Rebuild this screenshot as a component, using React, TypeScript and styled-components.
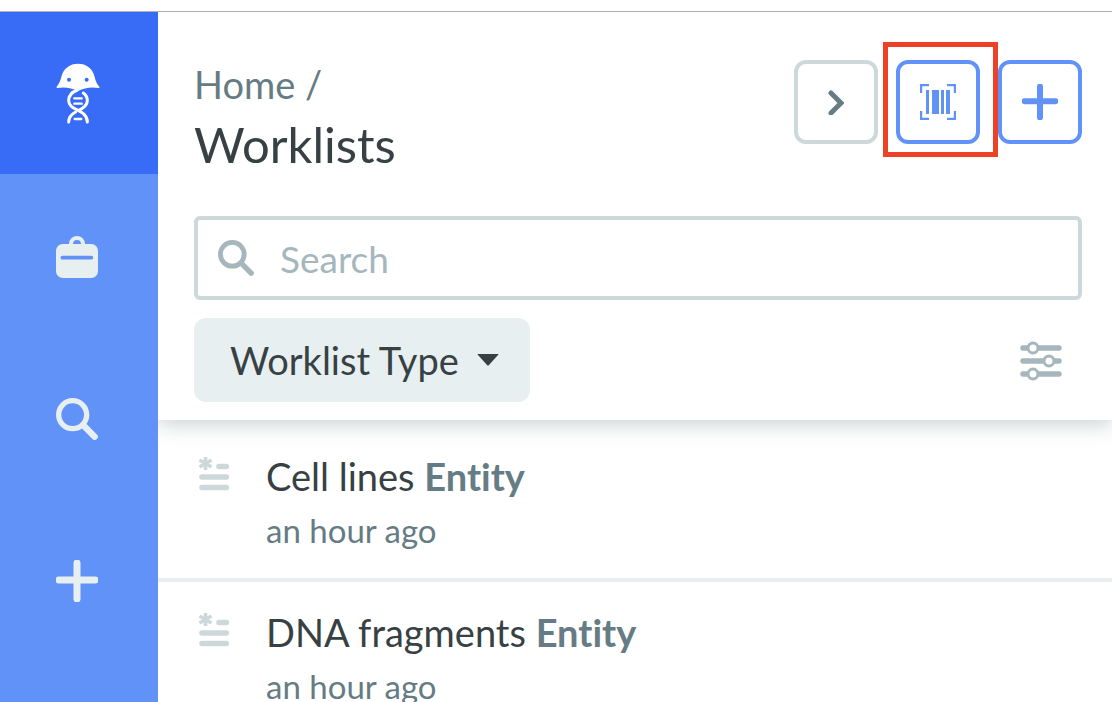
import React from "react";
import styled, { createGlobalStyle } from "styled-components";

const color = {
  brand: "#386cf6",
  accent: "#6192f7",
  pale: "#e7eff1",
  line: "#cdd8da",
  muted: "#a5b7bd",
  slate: "#657c84",
  ink: "#374144",
  alert: "#ec4127",
};

const GlobalStyle = createGlobalStyle`
  * { box-sizing: border-box; }
  body {
    margin: 0;
    background: #fff;
    color: ${color.ink};
    font-family: Lato, "Liberation Sans", sans-serif;
    font-variant-ligatures: none;
  }
  button, input, select { font-family: inherit; }
`;

const Shell = styled.div`
  display: flex;
  flex-direction: column;
  height: 100vh;
  overflow: hidden;
`;

const TopStrip = styled.div`
  flex: none;
  height: 12px;
  border-bottom: 1px solid #b3b3b3;
`;

const Body = styled.div`
  display: flex;
  flex: 1;
  min-height: 0;
`;

const Sidebar = styled.nav`
  display: flex;
  flex-direction: column;
  flex: none;
  width: 158px;
  background: ${color.accent};
  overflow: hidden;
`;

const NavItem = styled.a<{ $brand?: boolean }>`
  display: flex;
  align-items: center;
  justify-content: center;
  flex: none;
  height: 162px;
  padding: ${(p) => (p.$brand ? "2px 2px 0 0" : "4px 4px 0 0")};
  background: ${(p) => (p.$brand ? color.brand : "transparent")};
  color: ${(p) => (p.$brand ? "#fff" : color.pale)};
`;

const Main = styled.main`
  display: flex;
  flex-direction: column;
  flex: 1;
  min-width: 0;
  overflow: hidden;
`;

const Header = styled.header`
  position: relative;
  z-index: 1;
  display: flex;
  flex-direction: column;
  gap: 18px;
  flex: none;
  padding: 48px 30px 18px 36px;
  background: #fff;
  box-shadow: 0 4px 20px rgba(70, 100, 110, 0.3);
`;

const TitleBar = styled.div`
  display: flex;
  justify-content: space-between;
  align-items: flex-start;
  height: 138px;
`;

const Heading = styled.div`
  display: flex;
  flex-direction: column;
`;

const Crumb = styled.a`
  color: ${color.slate};
  font-size: 38px;
  line-height: 48px;
  text-decoration: none;
`;

const Title = styled.h1`
  margin: 0;
  font-size: 49px;
  font-weight: 400;
  line-height: 72px;
`;

const Actions = styled.div`
  display: flex;
  gap: 18px;
`;

const IconButton = styled.button<{ $quiet?: boolean }>`
  display: flex;
  align-items: center;
  justify-content: center;
  width: 84px;
  height: 84px;
  padding: 0;
  border: 4px solid ${(p) => (p.$quiet ? color.line : color.accent)};
  border-radius: 12px;
  background: #fff;
  color: ${(p) => (p.$quiet ? color.slate : color.accent)};
`;

const Highlight = styled.div`
  position: relative;
  &::after {
    content: "";
    position: absolute;
    inset: -18px -18px -13px -13px;
    border: 5px solid ${color.alert};
    pointer-events: none;
  }
`;

const SearchBox = styled.label`
  display: flex;
  align-items: center;
  gap: 26px;
  height: 84px;
  padding: 0 20px;
  border: 4px solid ${color.line};
  border-radius: 6px;
  color: ${color.muted};
`;

const SearchInput = styled.input`
  flex: 1;
  min-width: 0;
  padding: 2px 0 0;
  border: 0;
  outline: 0;
  background: transparent;
  color: ${color.ink};
  font-size: 37px;
  line-height: 44px;
  &::placeholder {
    color: ${color.muted};
    opacity: 1;
  }
`;

const FilterBar = styled.div`
  display: flex;
  align-items: center;
  justify-content: space-between;
`;

const SelectWrap = styled.div`
  display: grid;
  align-items: center;
  width: 336px;
  > * { grid-area: 1 / 1; }
  > svg {
    justify-self: end;
    margin-right: 31px;
    pointer-events: none;
  }
`;

const Select = styled.select`
  width: 100%;
  height: 84px;
  padding: 0 72px 0 36px;
  border: 0;
  border-radius: 12px;
  appearance: none;
  background: ${color.pale};
  color: ${color.ink};
  font-size: 38px;
`;

const PlainButton = styled.button`
  display: flex;
  padding: 2px 0 0;
  margin-right: 20px;
  border: 0;
  background: transparent;
  color: ${color.muted};
`;

const List = styled.ul`
  flex: 1;
  min-height: 0;
  margin: 0;
  padding: 6px 0 0;
  overflow: hidden;
  list-style: none;
`;

const Row = styled.li`
  display: flex;
  gap: 36px;
  height: 156px;
  padding: 28px 30px 0 40px;
  border-bottom: 4px solid ${color.pale};
  color: ${color.line};
`;

const RowText = styled.div`
  flex: 1;
  min-width: 0;
`;

const RowTitle = styled.div`
  color: ${color.ink};
  font-size: 38px;
  line-height: 44px;
`;

const Kind = styled.strong`
  color: ${color.slate};
  font-weight: 700;
`;

const RowTime = styled.div`
  padding-top: 12px;
  color: ${color.slate};
  font-size: 33px;
  line-height: 40px;
`;

const LogoIcon = () => (
  <svg width="44" height="62" viewBox="48 40 132 186" fill="none" aria-hidden="true">
    <path
      fill="currentColor"
      d="M50 111C56 104 61 95 64 82C70 56 90 42 114 42C139 42 158 56 164 82C167 95 171 104 178 111C179 113 178 115 175 115C155 111 133 114 114 124C95 114 73 111 53 115C50 115 49 113 50 111Z"
    />
    <g fill={color.brand}>
      <circle cx="87" cy="90" r="6" />
      <circle cx="140" cy="90" r="6" />
    </g>
    <g stroke="currentColor" strokeWidth="9" strokeLinecap="round">
      <path d="M112 121C96 127 86 137 86 153C86 184 142 178 142 217" />
      <path d="M130 130C138 136 142 143 142 153C142 167 130 175 117 182" />
      <path d="M107 187C94 194 86 203 86 217" />
      <path strokeWidth="7" d="M103 146H125M103 162H125M104 208H124" />
    </g>
  </svg>
);

const CaseIcon = () => (
  <svg width="42" height="42" viewBox="48 33 126 126" aria-hidden="true">
    <path d="M93 62V57a18 18 0 0 1 36 0V62" fill="none" stroke="currentColor" strokeWidth="12" />
    <rect x="48" y="57" width="126" height="102" rx="20" fill="currentColor" />
    <path d="M67 98H154" stroke={color.accent} strokeWidth="11" strokeLinecap="round" />
  </svg>
);

const SearchIcon = ({ size, weight }: { size: number; weight: number }) => (
  <svg
    width={size}
    height={size}
    viewBox="0 0 126 126"
    fill="none"
    stroke="currentColor"
    strokeLinecap="round"
    aria-hidden="true"
  >
    <circle cx="50" cy="50" r={50 - weight / 2} strokeWidth={weight} />
    <path d="M82 82L116 116" strokeWidth="19" />
  </svg>
);

const PlusIcon = ({ size }: { size: number }) => (
  <svg width={size} height={size} viewBox="0 0 42 42" aria-hidden="true">
    <path d="M21 3V39M3 20H39" stroke="currentColor" strokeWidth="7" strokeLinecap="round" />
  </svg>
);

const ChevronIcon = () => (
  <svg width="16" height="26" viewBox="0 0 16 26" fill="none" aria-hidden="true">
    <path d="M3 4L13 14L3 24" stroke="currentColor" strokeWidth="5" strokeLinecap="round" />
  </svg>
);

const BarcodeIcon = () => (
  <svg width="36" height="36" viewBox="0 0 36 36" aria-hidden="true">
    <path
      d="M1 9V1H9M27 1H35V9M35 27V35H27M9 35H1V27"
      fill="none"
      stroke="currentColor"
      strokeWidth="2.4"
    />
    <path d="M6 6h3v24H6zM12 6h7v24h-7zM21 6h3v24h-3zM26 6h4v24h-4z" fill="currentColor" />
  </svg>
);

const CaretIcon = () => (
  <svg width="22" height="12" viewBox="0 0 22 12" aria-hidden="true">
    <path d="M1 0H21Q22 0 21 1L12 11Q11 12 10 11L1 1Q0 0 1 0Z" fill={color.ink} />
  </svg>
);

const SlidersIcon = () => (
  <svg width="42" height="40" viewBox="0 0 42 40" stroke="currentColor" aria-hidden="true">
    <path d="M3 7H39M3 20H39M3 33H39" strokeWidth="5.4" strokeLinecap="round" />
    <g fill="#fff" strokeWidth="3">
      <circle cx="13" cy="7" r="5" />
      <circle cx="29" cy="20" r="5" />
      <circle cx="13" cy="33" r="5" />
    </g>
  </svg>
);

const EntityIcon = () => (
  <svg
    width="32"
    height="38"
    viewBox="0 0 32 38"
    stroke="currentColor"
    strokeLinecap="round"
    aria-hidden="true"
  >
    <path d="M7.5 3V16M1.5 6L13.5 13M13.5 6L1.5 13" strokeWidth="3.6" strokeLinecap="butt" />
    <path d="M21 12.5H28.3M4 23H28.3M4 33.5H28.3" strokeWidth="5.6" />
  </svg>
);

const worklists = [
  { name: "Cell lines", kind: "Entity", time: "an hour ago" },
  { name: "DNA fragments", kind: "Entity", time: "an hour ago" },
];

export default function App() {
  return (
    <Shell>
      <GlobalStyle />
      <TopStrip />
      <Body>
        <Sidebar aria-label="Main">
          <NavItem href="#home" $brand aria-label="Home">
            <LogoIcon />
          </NavItem>
          <NavItem href="#projects" aria-label="Projects">
            <CaseIcon />
          </NavItem>
          <NavItem href="#search" aria-label="Search">
            <SearchIcon size={42} weight={16} />
          </NavItem>
          <NavItem href="#create" aria-label="Create">
            <PlusIcon size={42} />
          </NavItem>
        </Sidebar>
        <Main>
          <Header>
            <TitleBar>
              <Heading>
                <Crumb href="#home">Home /</Crumb>
                <Title>Worklists</Title>
              </Heading>
              <Actions>
                <IconButton $quiet aria-label="Expand">
                  <ChevronIcon />
                </IconButton>
                <Highlight>
                  <IconButton aria-label="Scan barcode">
                    <BarcodeIcon />
                  </IconButton>
                </Highlight>
                <IconButton aria-label="Create worklist">
                  <PlusIcon size={36} />
                </IconButton>
              </Actions>
            </TitleBar>
            <SearchBox>
              <SearchIcon size={36} weight={17} />
              <SearchInput type="text" placeholder="Search" aria-label="Search worklists" />
            </SearchBox>
            <FilterBar>
              <SelectWrap>
                <Select aria-label="Worklist type">
                  <option>Worklist Type</option>
                </Select>
                <CaretIcon />
              </SelectWrap>
              <PlainButton aria-label="Filters">
                <SlidersIcon />
              </PlainButton>
            </FilterBar>
          </Header>
          <List>
            {worklists.map((item) => (
              <Row key={item.name}>
                <EntityIcon />
                <RowText>
                  <RowTitle>
                    {item.name} <Kind>{item.kind}</Kind>
                  </RowTitle>
                  <RowTime>{item.time}</RowTime>
                </RowText>
              </Row>
            ))}
          </List>
        </Main>
      </Body>
    </Shell>
  );
}
